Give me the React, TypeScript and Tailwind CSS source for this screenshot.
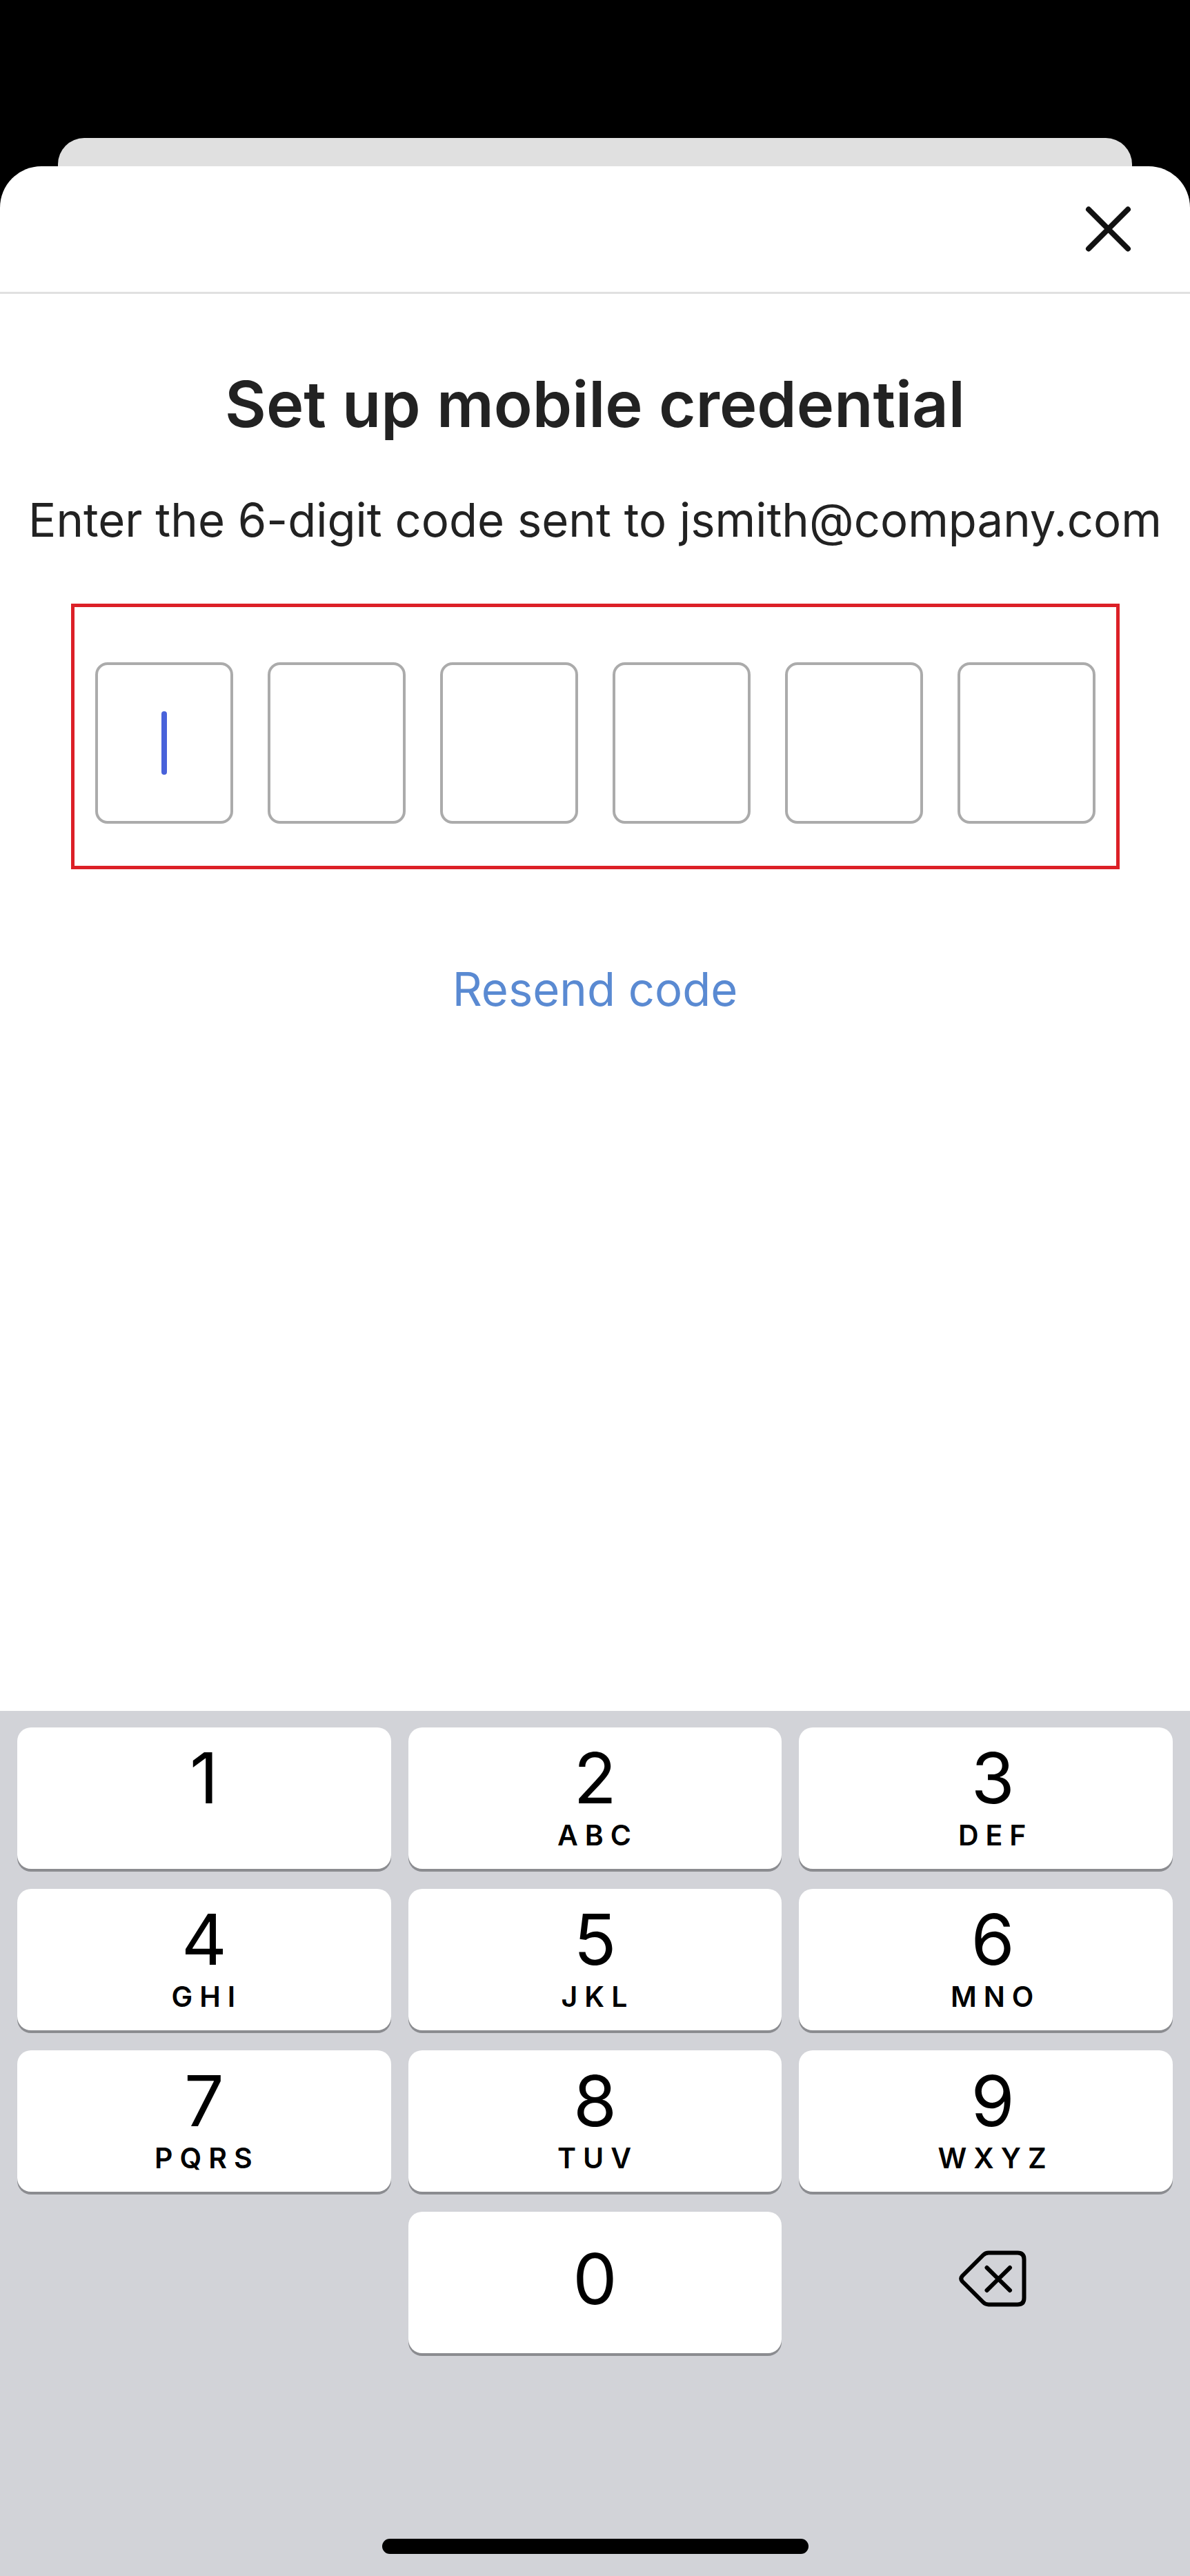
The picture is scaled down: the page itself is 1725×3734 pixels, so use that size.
import { useState } from "react";
import clsx from "clsx";

const keys = [
  { digit: "1", letters: "" },
  { digit: "2", letters: "ABC" },
  { digit: "3", letters: "DEF" },
  { digit: "4", letters: "GHI" },
  { digit: "5", letters: "JKL" },
  { digit: "6", letters: "MNO" },
  { digit: "7", letters: "PQRS" },
  { digit: "8", letters: "TUV" },
  { digit: "9", letters: "WXYZ" },
];

const CODE_LENGTH = 6;

const keyClass = "h-[205px] rounded-[20px] bg-white shadow-[0_4px_0_#8b8c90]";

function CloseIcon() {
  return (
    <svg viewBox="0 0 68 68" className="size-[68px]" fill="none" stroke="#111" strokeWidth="8" strokeLinecap="round" aria-hidden="true">
      <path d="M5 5.500 62 62.500M62 5.500 5 62.500" />
    </svg>
  );
}

function BackspaceIcon() {
  return (
    <svg viewBox="0 0 98 82" className="h-[82px] w-[98px]" fill="none" stroke="#000" strokeWidth="6" strokeLinecap="round" strokeLinejoin="round" aria-hidden="true">
      <path d="M43 3.5H85Q94.500 3.500 94.500 13V69Q94.500 78.500 85 78.500H43Q38.500 78.500 35 75L5 45Q1.500 41 5 37L35 7Q38.500 3.500 43 3.500Z" />
      <path d="M40.500 25 74 58M74 25 40.500 58" />
    </svg>
  );
}

export default function App() {
  const [code, setCode] = useState("");

  const press = (digit: string) =>
    setCode((prev) => (prev + digit).slice(0, CODE_LENGTH));

  return (
    <div className="flex min-h-screen flex-col bg-black pt-[200px] font-['Inter',sans-serif] text-[#222]">
      {/* Sheet underneath */}
      <div className="mx-[84px] h-[41px] shrink-0 rounded-t-[38px] bg-[#e0e0e0]" />

      <div className="flex flex-1 flex-col overflow-hidden rounded-t-[60px] bg-white">
        <header className="flex h-[185px] shrink-0 items-center justify-end border-b-[3px] border-[#e0e0e0] px-[84px]">
          <button type="button" aria-label="Close">
            <CloseIcon />
          </button>
        </header>

        <main className="flex flex-1 flex-col items-center">
          <h1 className="mt-[100px] text-[92px] leading-[120px] font-semibold">
            Set up mobile credential
          </h1>
          <p className="mt-[68px] text-[67px] leading-[80px] whitespace-nowrap">
            Enter the 6-digit code sent to jsmith@company.com
          </p>

          {/* Code entry */}
          <div className="mt-[81px] flex gap-[50px] border-[5px] border-[#dc2027] px-[30px] pt-20 pb-[61px]">
            {Array.from({ length: CODE_LENGTH }, (_, i) => (
              <div key={i} className="relative">
                <input
                  type="text"
                  inputMode="numeric"
                  maxLength={1}
                  readOnly
                  aria-label={`Digit ${i + 1}`}
                  value={code[i] ?? ""}
                  className="block h-[234px] w-[200px] rounded-[18px] border-4 border-[#ababab] text-center text-[92px] caret-transparent outline-none"
                />
                {i === code.length && (
                  <span className="pointer-events-none absolute inset-0 m-auto h-[92px] w-2 rounded-full bg-[#4862da]" />
                )}
              </div>
            ))}
          </div>

          <a href="#resend" className="mt-[134px] text-[67px] leading-[80px] text-[#5a8ad2]">
            Resend code
          </a>
        </main>

        {/* Keypad */}
        <section aria-label="Keypad" className="flex shrink-0 flex-col items-center bg-[#d2d3d8] px-[25px] pt-6 pb-8">
          <div className="grid w-full grid-cols-3 gap-x-[25px] gap-y-[29px] text-black">
            {keys.map(({ digit, letters }, i) => (
              <button
                key={digit}
                type="button"
                onClick={() => press(digit)}
                className={clsx(keyClass, "flex flex-col items-center gap-2 pt-[23px]", i % 3 === 2 && "pl-5")}
              >
                <span className="text-[102px] leading-[100px]">{digit}</span>
                {letters && (
                  <span className="pl-2 text-[41px] leading-[50px] font-semibold tracking-[10px]">
                    {letters}
                  </span>
                )}
              </button>
            ))}
            <button
              type="button"
              onClick={() => press("0")}
              className={clsx(keyClass, "col-start-2 flex items-center justify-center pb-[11px]")}
            >
              <span className="text-[102px] leading-[100px]">0</span>
            </button>
            <button
              type="button"
              aria-label="Delete"
              onClick={() => setCode((prev) => prev.slice(0, -1))}
              className="flex items-center justify-center pb-[11px] pl-5"
            >
              <BackspaceIcon />
            </button>
          </div>

          {/* Home indicator */}
          <div className="mt-[269px] h-[22px] w-[618px] rounded-full bg-black" />
        </section>
      </div>
    </div>
  );
}
